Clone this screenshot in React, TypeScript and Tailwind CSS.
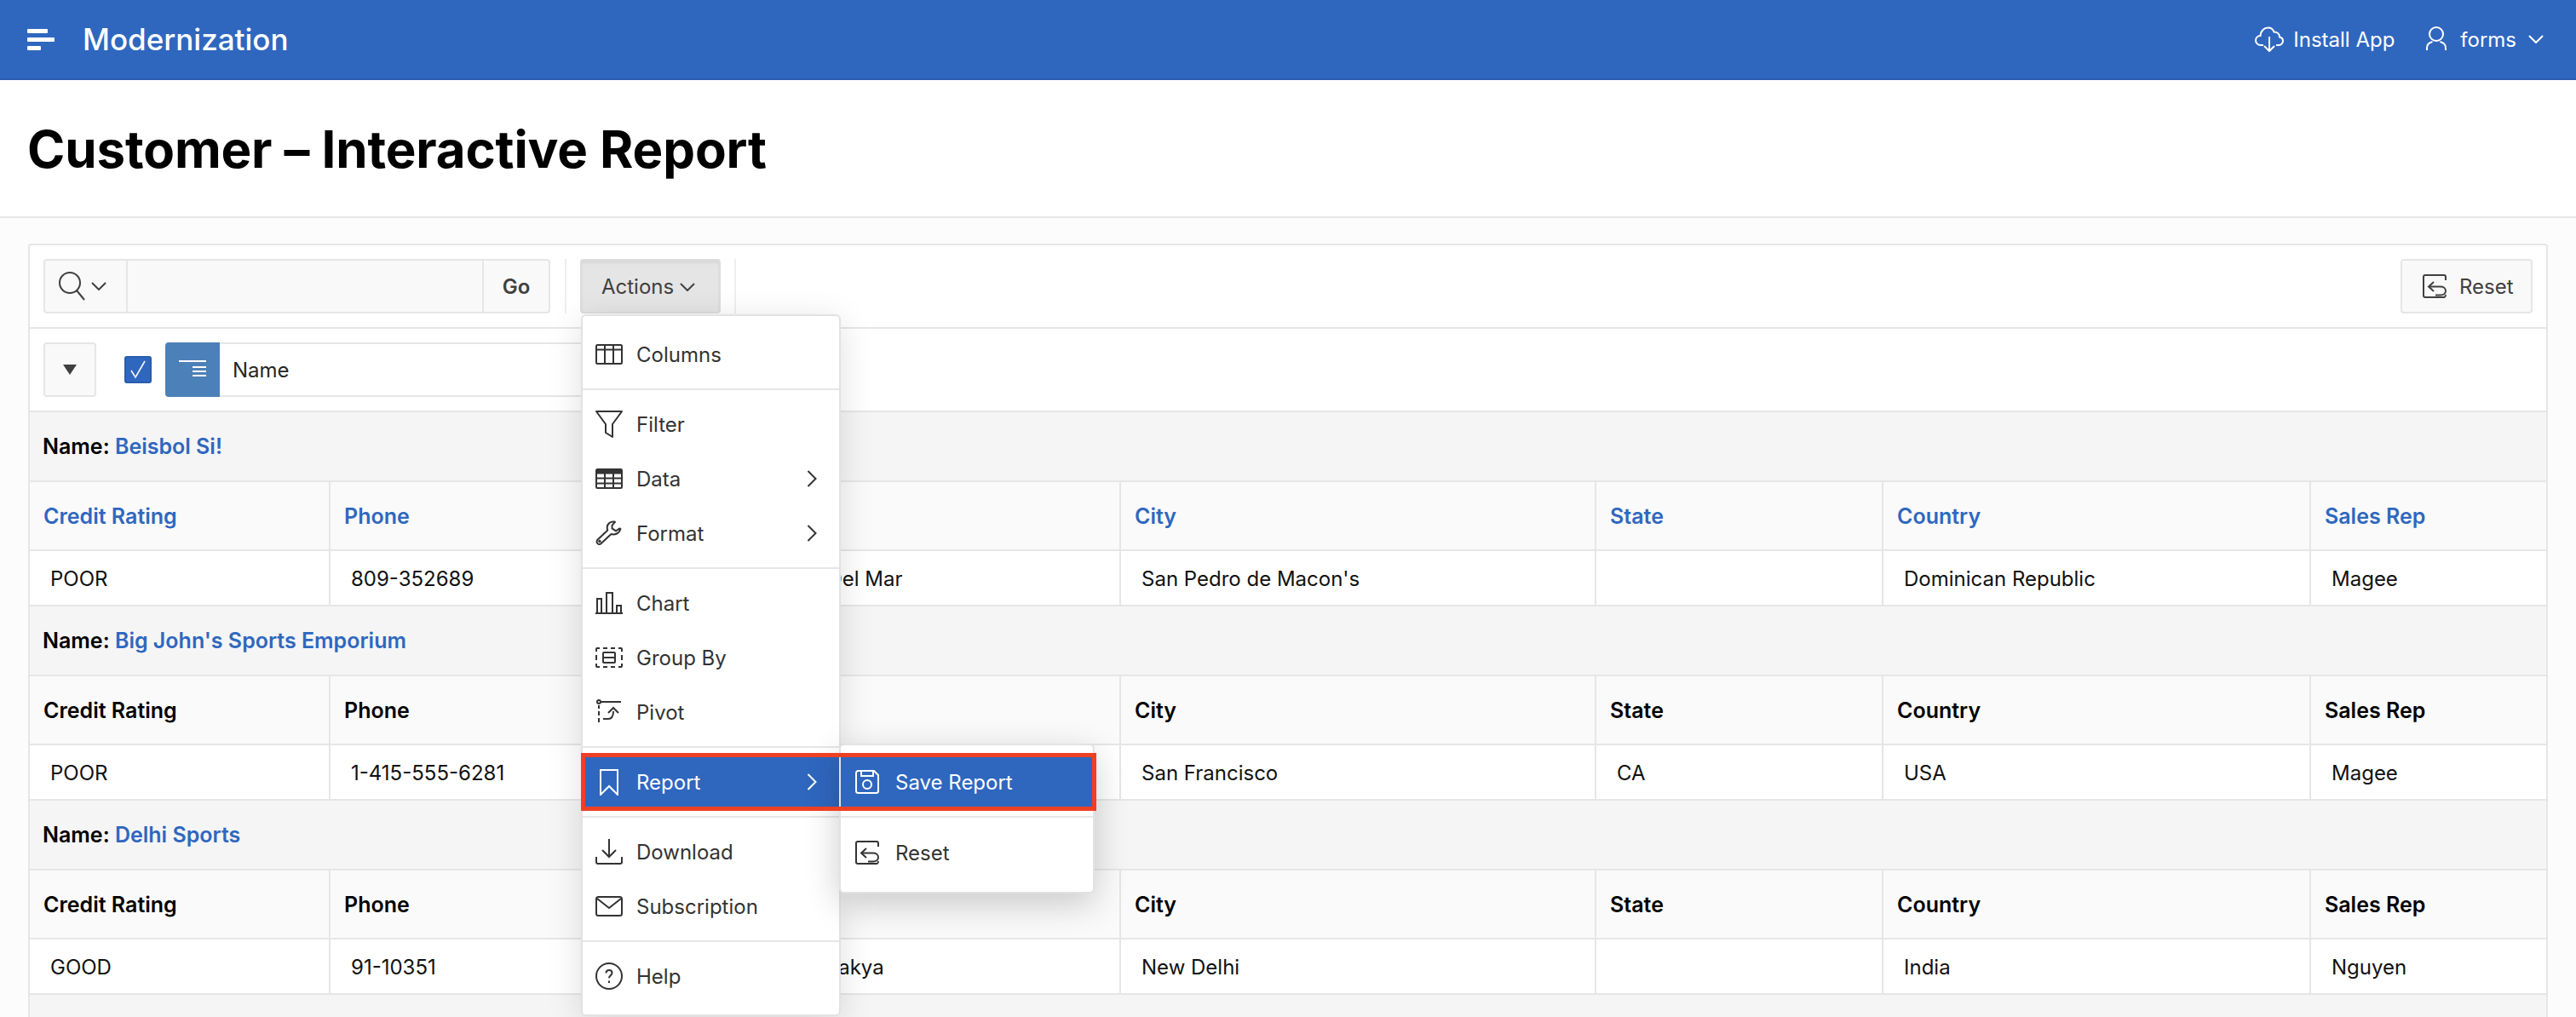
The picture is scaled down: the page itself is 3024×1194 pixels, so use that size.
import React from "react";

type IP = { className?: string };
const S = ({ className, w = 32, h = 32, children, sw = 2 }: { className?: string; w?: number; h?: number; children: React.ReactNode; sw?: number }) => (
  <svg width={w} height={h} viewBox={`0 0 ${w} ${h}`} fill="none" stroke="currentColor" strokeWidth={sw} className={className}>
    {children}
  </svg>
);

const ColumnsIcon = () => (
  <S>
    <rect x="1" y="5" width="30" height="22" rx="1.5" />
    <path d="M1 10.5h30M11 5v22M21 5v22" />
  </S>
);
const FilterIcon = () => (
  <S>
    <path d="M1 1h30L20 16v15l-8-5V16z" strokeLinejoin="round" />
  </S>
);
const DataIcon = () => (
  <S>
    <rect x="1" y="5" width="30" height="22" rx="1.5" />
    <path d="M1 6.5h30M1 7.5h30M1 9.5h30M1 15.5h30M1 21.5h30M11 9v18M21 9v18" />
  </S>
);
const WrenchIcon = () => (
  <S>
    <path d="M22 2.5c-4-.6-8 2-8.300 6.500-.1 1.500.2 2.500.6 3.500L2.500 23.800c-1.300 1.300-1.300 3 0 4.300 1.200 1.200 3 1.200 4.200 0L18.500 17c4.500 1.300 9.500-.6 11-6l-1-.6-4.500 3-4.500-3 .1-3.800 3.400-3.800z" strokeLinejoin="round" />
    <circle cx="5" cy="25.500" r="1" strokeWidth="1.500" />
  </S>
);
const ChartIcon = () => (
  <S>
    <path d="M0 28h32M2 27V11h5v16M13 27V4h7v23M25 27v-8h5v8" />
  </S>
);
const GroupIcon = () => (
  <S>
    <path d="M1 9V6a1 1 0 0 1 1-1h3M9 5h5M18 5h5M27 5h3a1 1 0 0 1 1 1v3M31 13v6M31 23v3a1 1 0 0 1-1 1h-3M23 27h-5M14 27H9M5 27H2a1 1 0 0 1-1-1v-3M1 19v-6" />
    <rect x="9" y="10" width="14" height="12" rx="1" />
    <path d="M9 16h14" />
  </S>
);
const PivotIcon = () => (
  <S>
    <circle cx="4" cy="4" r="2" />
    <path d="M6 4h24M4 8v4M4 15v5M4 23v5" />
    <path d="M9 24h6c4 0 6-3 6-9" />
    <path d="M15 17l6-6 6 6" />
  </S>
);
const BookmarkIcon = () => (
  <S>
    <path d="M6 2h20v29L16 21 6 31z" />
  </S>
);
const DownloadIcon = () => (
  <S>
    <path d="M16 1v20M8 14l8 8 8-8" />
    <path d="M1 22v6a2 2 0 0 0 2 2h26a2 2 0 0 0 2-2v-6" />
  </S>
);
const MailIcon = () => (
  <S>
    <rect x="1" y="5" width="30" height="22" rx="2.500" />
    <path d="M2 7l14 11L30 7" />
  </S>
);
const HelpIcon = () => (
  <S>
    <circle cx="16" cy="16" r="15" />
    <path d="M12.500 12.500c0-2.200 1.500-3.500 3.500-3.500s3.500 1.300 3.500 3.300c0 3-3.500 3-3.500 6" />
    <path d="M16 21.500v2.500" />
  </S>
);
const SaveIcon = () => (
  <S w={28} h={28}>
    <path d="M1 3.500A2.500 2.500 0 0 1 3.500 1H22l5 5v18.500a2.500 2.500 0 0 1-2.500 2.500h-21A2.500 2.500 0 0 1 1 24.500z" />
    <path d="M7 1v6h14V1" />
    <circle cx="14" cy="17" r="5" />
  </S>
);
const ResetIcon = () => (
  <S w={28} h={28}>
    <path d="M27 7V3a2 2 0 0 0-2-2H3a2 2 0 0 0-2 2v22a2 2 0 0 0 2 2h22a2 2 0 0 0 1.500-3" />
    <path d="M13 9l-6 5.500 6 5.500" />
    <path d="M7 14.500h14c3 0 6 1.500 6 5s-3 5-6 5h-6" />
  </S>
);
const Chevron = ({ className }: IP) => (
  <svg width="18" height="10" viewBox="0 0 18 10" fill="none" stroke="currentColor" strokeWidth="2" className={className}>
    <path d="M1 1l8 8 8-8" />
  </svg>
);
const ChevronRight = () => (
  <svg width="12" height="20" viewBox="0 0 12 20" fill="none" stroke="currentColor" strokeWidth="2" className="ml-auto mr-[26px]">
    <path d="M1.500 1l9 9-9 9" />
  </svg>
);

function Item({ icon, label, more }: { icon: React.ReactNode; label: string; more?: boolean }) {
  return (
    <div className="h-16 flex items-center pl-[15px] text-[#333333]">
      <span className="w-8 h-8 shrink-0">{icon}</span>
      <span className="ml-[16px] pt-[2px]">{label}</span>
      {more && <ChevronRight />}
    </div>
  );
}

const Sep = () => <div className="h-[2px] bg-[#e6e6e6]" />;

function ActionsMenu() {
  return (
    <div className="absolute z-20 left-[647px] top-[81px] w-[305px] h-[824px] bg-white border-2 border-[#e2e2e2] rounded-[6px] text-[24px] shadow-[0_8px_40px_rgba(0,0,0,0.13)]">
      <div className="pt-[13px] pb-2">
        <Item icon={<ColumnsIcon />} label="Columns" />
      </div>
      <Sep />
      <div className="py-2">
        <Item icon={<FilterIcon />} label="Filter" />
        <Item icon={<DataIcon />} label="Data" more />
        <Item icon={<WrenchIcon />} label="Format" more />
      </div>
      <Sep />
      <div className="py-2">
        <Item icon={<ChartIcon />} label="Chart" />
        <Item icon={<GroupIcon />} label="Group By" />
        <Item icon={<PivotIcon />} label="Pivot" />
      </div>
      <Sep />
      <div className="py-2">
        <div className="relative h-16 flex items-center pl-[15px] bg-[#2f67bf] text-white">
          <span className="w-8 h-8 shrink-0"><BookmarkIcon /></span>
          <span className="ml-[16px] pt-[2px]">Report</span>
          <ChevronRight />
          <div className="absolute z-30 left-[301px] top-[-13px] w-[300px] h-[176px] bg-white border-2 border-[#e2e2e2] rounded-[6px] text-[#333333] shadow-[0_12px_40px_rgba(0,0,0,0.2)]">
            <div className="pt-[11px] pb-2">
              <div className="h-16 flex items-center pl-[17px] bg-[#2f67bf] text-white">
                <span className="w-7 h-7 shrink-0"><SaveIcon /></span>
                <span className="ml-[19px] pt-[2px]">Save Report</span>
              </div>
            </div>
            <Sep />
            <div className="pt-[9px]">
              <div className="h-16 flex items-center pl-[17px]">
                <span className="w-7 h-7 shrink-0"><ResetIcon /></span>
                <span className="ml-[19px] pt-[2px]">Reset</span>
              </div>
            </div>
          </div>
          <div className="absolute z-40 left-[-2px] top-[-2px] w-[605px] h-[68px] border-[5px] border-[#ee4023] pointer-events-none" />
        </div>
      </div>
      <Sep />
      <div className="py-2">
        <Item icon={<DownloadIcon />} label="Download" />
        <Item icon={<MailIcon />} label="Subscription" />
      </div>
      <Sep />
      <div className="py-2">
        <Item icon={<HelpIcon />} label="Help" />
      </div>
    </div>
  );
}

const columns = ["Credit Rating", "Phone", "", "City", "State", "Country", "Sales Rep"];
const groups = [
  { name: "Beisbol Si!", link: true, row: ["POOR", "809-352689", "792 Playa Del Mar", "San Pedro de Macon's", "", "Dominican Republic", "Magee"] },
  { name: "Big John's Sports Emporium", link: false, row: ["POOR", "1-415-555-6281", "4783 18th Street", "San Francisco", "CA", "USA", "Magee"] },
  { name: "Delhi Sports", link: false, row: ["GOOD", "91-10351", "11368 Chanakya", "New Delhi", "", "India", "Nguyen"] },
];

function Report() {
  return (
    <table className="w-full table-fixed border-separate border-spacing-0 text-[24px]">
      <colgroup>
        <col className="w-[353px]" />
        <col className="w-[442px]" />
        <col className="w-[486px]" />
        <col className="w-[558px]" />
        <col className="w-[337px]" />
        <col className="w-[502px]" />
        <col />
      </colgroup>
      <tbody>
        {groups.map((g) => (
          <React.Fragment key={g.name}>
            <tr>
              <td colSpan={7} className="h-[82px] pl-[15px] pt-[2px] bg-[#f5f5f5] border-b-2 border-[#e6e6e6] text-[25px] font-semibold text-black">
                Name: <span className="text-[#2f67bf]">{g.name}</span>
              </td>
            </tr>
            <tr>
              {columns.map((c, i) => (
                <th
                  key={i}
                  className={`h-[81px] pl-4 pt-[2px] text-left text-[25px] font-semibold bg-[#fafafa] border-b-2 border-[#e6e6e6] ${i < 6 ? "border-r-2" : ""} ${g.link ? "text-[#2f67bf]" : "text-black"}`}
                >
                  {c}
                </th>
              ))}
            </tr>
            <tr>
              {g.row.map((v, i) => (
                <td key={i} className={`h-[65px] pl-6 pt-[2px] bg-white border-b-2 border-[#e6e6e6] text-[#111111] ${i < 6 ? "border-r-2" : ""}`}>
                  {v}
                </td>
              ))}
            </tr>
          </React.Fragment>
        ))}
        <tr>
          <td colSpan={7} className="h-[82px] bg-[#f5f5f5]" />
        </tr>
      </tbody>
    </table>
  );
}

export default function App() {
  return (
    <div className="h-[1194px] w-[3024px] overflow-hidden bg-[#fcfcfc] font-['Inter',sans-serif] text-[#262626]">
      <header className="h-[94px] bg-[#2f67bf] border-b-2 border-[#2a5cac] flex items-center text-white shadow-[0_2px_8px_rgba(0,0,0,0.06)]">
        <div className="ml-8 w-8 flex flex-col gap-[5px]">
          <span className="block h-[5px] w-6 bg-white rounded-[1px]" />
          <span className="block h-[5px] w-8 bg-white rounded-[1px]" />
          <span className="block h-[5px] w-4 bg-white rounded-[1px]" />
        </div>
        <div className="ml-[33px] text-[35px] font-medium">Modernization</div>
        <div className="ml-auto flex items-center text-[24px] text-white pr-[38px]">
          <svg width="34" height="30" viewBox="0 0 34 30" fill="none" stroke="currentColor" strokeWidth="2">
            <path d="M10 22H7c-3.500 0-6-2.500-6-5.500S3 11 6.500 11C7 5 11 1.500 15.500 1.500c3.500 0 6 2 7 5 4 0 6.500 2.500 6.500 6 2.500.5 4 2 4 4.500s-2 5-5 5h-3" />
            <path d="M17 12v17M11 23l6 6 6-6" />
          </svg>
          <span className="ml-[11px] pt-[2px]">Install App</span>
          <svg className="ml-[37px]" width="24" height="30" viewBox="0 0 24 30" fill="none" stroke="currentColor" strokeWidth="2">
            <circle cx="12" cy="9" r="8" />
            <path d="M1 28v-3c0-4 3-6 6.500-7M23 28v-3c0-4-3-6-6.500-7" />
          </svg>
          <span className="ml-4 pt-[2px]">forms</span>
          <Chevron className="ml-[14px]" />
        </div>
      </header>

      <div className="h-[162px] bg-white border-b-2 border-[#e6e6e6] flex items-center pl-[32px] pt-[2px]">
        <h1 className="text-[60px] font-bold text-black leading-none tracking-[-0.13px]">Customer – Interactive Report</h1>
      </div>

      <section className="relative mt-[30px] ml-[33px] w-[2958px] bg-white border-2 border-[#e6e6e6] rounded-[4px]">
        <div className="h-[98px] border-b-2 border-[#e6e6e6] flex items-center pl-4 pr-[16px]">
          <div className="h-16 w-[595px] flex bg-[#f9f9f9] border-2 border-[#e6e6e6] rounded-[4px]">
            <div className="w-[97px] flex items-center pl-[16px] border-r-2 border-[#e6e6e6] text-[#404040]">
              <svg width="32" height="34" viewBox="0 0 32 34" fill="none" stroke="currentColor" strokeWidth="2">
                <circle cx="13" cy="13" r="12" />
                <path d="M21 22l9 11" />
              </svg>
              <Chevron className="ml-[6px]" />
            </div>
            <div className="flex-1" />
            <div className="w-[78px] flex items-center justify-center pt-[2px] border-l-2 border-[#e6e6e6] text-[24px] font-semibold text-[#404040]">Go</div>
          </div>
          <div className="ml-[17px] w-[2px] h-16 bg-[#eeeeee]" />
          <div className="ml-4 h-16 w-[165px] flex items-center pl-[23px] pt-[2px] bg-[#e5e5e5] border-2 border-[#dcdcdc] rounded-[4px] shadow-[inset_0_3px_3px_rgba(0,0,0,0.06)] text-[24px] text-[#404040]">
            Actions
            <Chevron className="ml-[7px]" />
          </div>
          <div className="ml-4 w-[2px] h-16 bg-[#eeeeee]" />
          <div className="ml-auto h-16 w-[155px] flex items-center pl-[24px] bg-[#f9f9f9] border-2 border-[#e6e6e6] rounded-[4px] text-[24px] text-[#404040]">
            <ResetIcon />
            <span className="ml-[15px] pt-[2px]">Reset</span>
          </div>
        </div>

        <div className="h-[98px] border-b-2 border-[#e6e6e6] flex items-center pl-4">
          <div className="h-16 w-[62px] flex items-center justify-center bg-[#f9f9f9] border-2 border-[#e6e6e6] rounded-[4px]">
            <svg width="16" height="12" viewBox="0 0 16 12" className="text-[#404040]" fill="currentColor">
              <path d="M0 0h16L8 12z" />
            </svg>
          </div>
          <div className="ml-[33px] w-8 h-8 flex items-center justify-center bg-[#2f67bf] rounded-[3px] border-2 border-[#2a5cac]">
            <svg width="20" height="22" viewBox="0 0 20 22" fill="none" stroke="white" strokeWidth="1.500">
              <path d="M2 12l5 8L18 1" />
            </svg>
          </div>
          <div className="ml-4 h-16 w-16 bg-[#4c80b8] rounded-l-[4px] flex flex-col items-end justify-center gap-[3px] pr-4 pb-[4px]">
            <span className="block h-[2px] w-8 bg-white mb-[2px]" />
            <span className="block h-[2px] w-4 bg-white" />
            <span className="block h-[2px] w-4 bg-white" />
            <span className="block h-[2px] w-4 bg-white" />
          </div>
          <div className="h-16 w-[500px] bg-white border-y-2 border-[#e6e6e6] flex items-center pl-[15px] pt-[2px] text-[24px] text-[#262626]">Name</div>
        </div>

        <Report />
        <ActionsMenu />
      </section>
    </div>
  );
}
